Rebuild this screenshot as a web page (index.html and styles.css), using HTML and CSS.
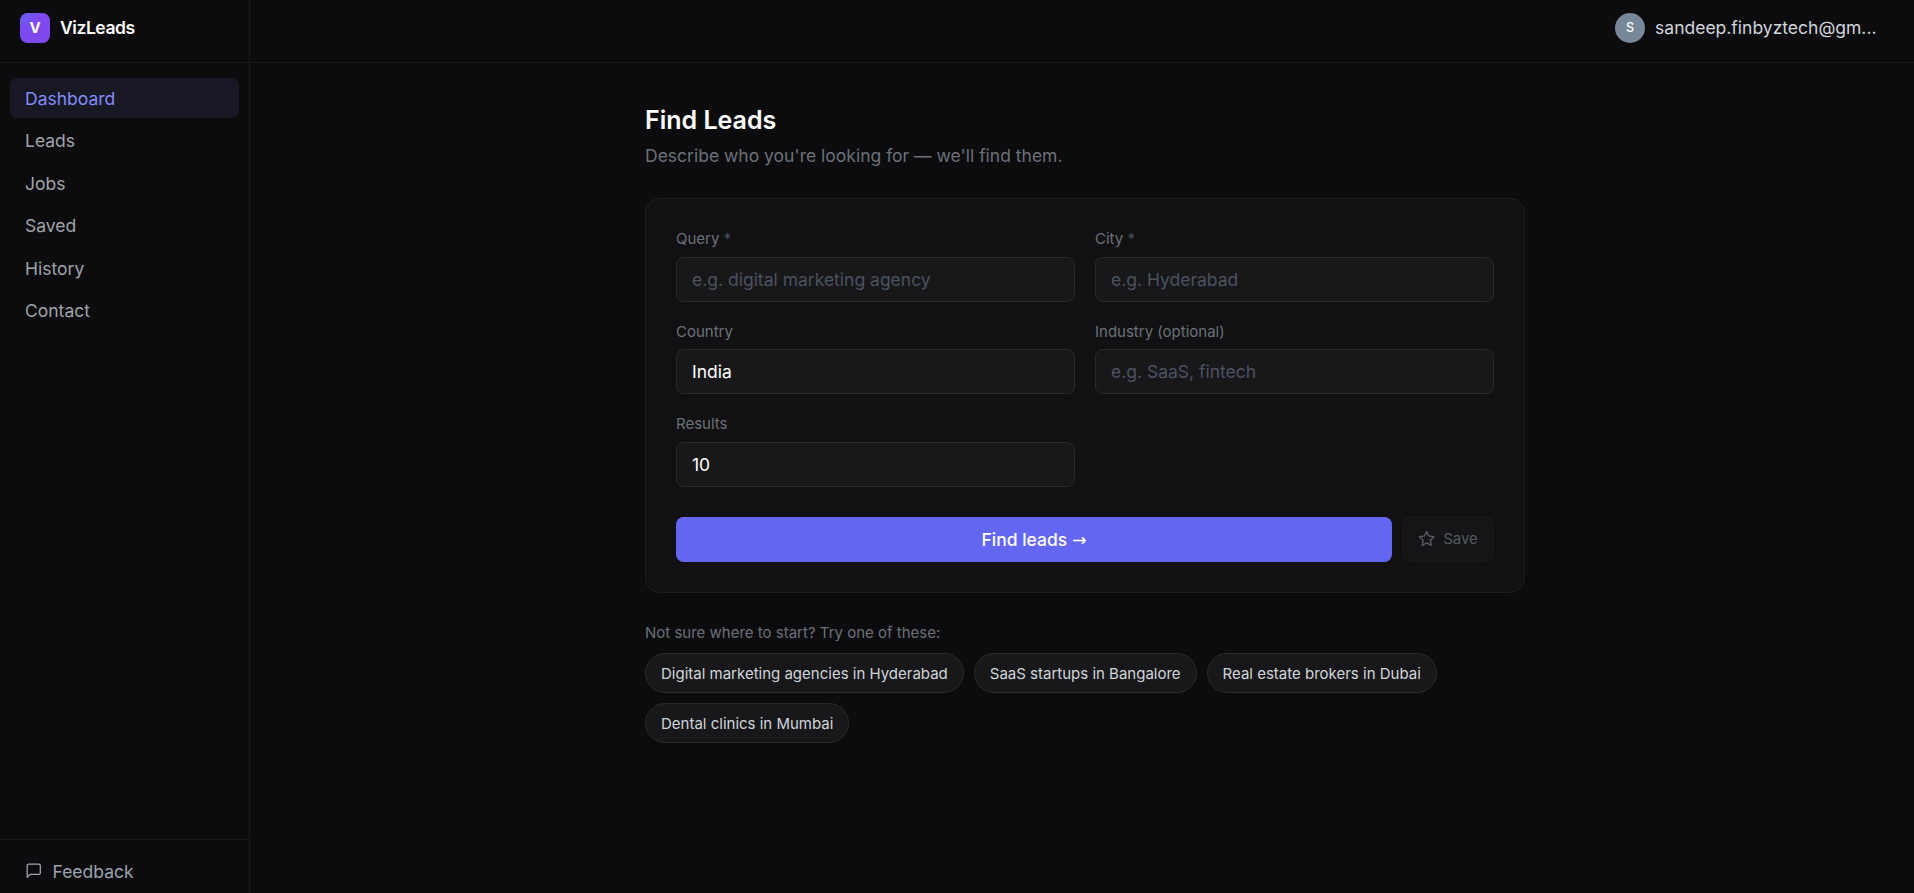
FILE: index.html
```html
<!DOCTYPE html>
<html lang="en">
<head>
<meta charset="utf-8">
<title>VizLeads</title>
<link rel="stylesheet" href="styles.css">
</head>
<body>
<div class="app">
  <aside class="sidebar">
    <div class="brand"><span class="logo">V</span><span class="brand-name">VizLeads</span></div>
    <nav class="nav">
      <a class="nav-item active">Dashboard</a>
      <a class="nav-item">Leads</a>
      <a class="nav-item">Jobs</a>
      <a class="nav-item">Saved</a>
      <a class="nav-item">History</a>
      <a class="nav-item">Contact</a>
    </nav>
    <div class="feedback">
      <svg class="icon-chat" viewBox="0 0 24 24"><path d="M21 15a2 2 0 0 1-2 2H7l-4 4V5a2 2 0 0 1 2-2h14a2 2 0 0 1 2 2z"/></svg>
      <span>Feedback</span>
    </div>
  </aside>
  <div class="page">
    <header class="topbar"><span class="avatar">S</span><span class="email">sandeep.finbyztech@gm...</span></header>
    <main class="content">
      <h1 class="title">Find Leads</h1>
      <p class="subtitle">Describe who you're looking for — we'll find them.</p>
      <form class="card">
        <div class="fields">
          <label class="field"><span class="label">Query <span class="req">*</span></span><input class="input" placeholder="e.g. digital marketing agency"></label>
          <label class="field"><span class="label">City <span class="req">*</span></span><input class="input" placeholder="e.g. Hyderabad"></label>
          <label class="field"><span class="label">Country</span><input class="input" value="India"></label>
          <label class="field"><span class="label">Industry (optional)</span><input class="input" placeholder="e.g. SaaS, fintech"></label>
          <label class="field"><span class="label">Results</span><input class="input" value="10"></label>
        </div>
        <div class="actions">
          <button class="submit" type="button">Find leads <span class="arrow">→</span></button>
          <button class="save" type="button">
            <svg class="icon-star" viewBox="0 0 24 24"><path d="M12 2l3.09 6.26L22 9.27l-5 4.87 1.18 6.88L12 17.77l-6.18 3.25L7 14.14 2 9.27l6.91-1.01z"/></svg>
            <span>Save</span>
          </button>
        </div>
      </form>
      <p class="hint">Not sure where to start? Try one of these:</p>
      <div class="chips">
        <button class="chip">Digital marketing agencies in Hyderabad</button>
        <button class="chip">SaaS startups in Bangalore</button>
        <button class="chip">Real estate brokers in Dubai</button>
        <button class="chip">Dental clinics in Mumbai</button>
      </div>
    </main>
  </div>
</div>
</body>
</html>
```
FILE: styles.css
```css
* { box-sizing: border-box; margin: 0; }
body {
  height: 893px;
  overflow: hidden;
  background: #0c0c0e;
  color: #fff;
  font: 17.5px/25px Inter, sans-serif;
}
button, input { font-family: inherit; }
.app { display: flex; height: 893px; }
.sidebar {
  width: 250px;
  flex: none;
  display: flex;
  flex-direction: column;
  border-right: 1px solid #1a1a1d;
}
.brand {
  height: 63px;
  padding: 0 20px 7px;
  display: flex;
  align-items: center;
  gap: 10px;
  border-bottom: 1px solid #1a1a1d;
}
.logo {
  width: 30px;
  height: 30px;
  border-radius: 7.5px;
  background: linear-gradient(135deg, #6366f1 0%, #7c4af0 35%, #8048ee 100%);
  font-size: 15px;
  font-weight: 700;
  line-height: 29px;
  text-align: center;
}
.brand-name { font-weight: 600; letter-spacing: -0.44px; }
.nav {
  flex: 1;
  padding: 14.75px 10px;
  display: flex;
  flex-direction: column;
  gap: 2.5px;
}
.nav-item {
  height: 40px;
  padding: 8px 15px;
  border-radius: 7.5px;
  color: #a0a3aa;
}
.nav-item.active { background: #181824; color: #818cf8; }
.feedback {
  height: 54px;
  padding: 9px 25px 0;
  display: flex;
  align-items: center;
  gap: 10px;
  border-top: 1px solid #1a1a1d;
  color: #9ca3af;
}
.icon-chat, .icon-star {
  width: 17.5px;
  height: 17.5px;
  flex: none;
  fill: none;
  stroke: currentColor;
  stroke-width: 1.8;
  stroke-linecap: round;
  stroke-linejoin: round;
}
.icon-star { stroke-width: 2; }
.page { flex: 1; }
.topbar {
  height: 63px;
  padding: 0 37.5px 7px;
  display: flex;
  justify-content: flex-end;
  align-items: center;
  gap: 10px;
  border-bottom: 1px solid #1a1a1d;
}
.avatar {
  width: 30px;
  height: 30px;
  border-radius: 50%;
  background: #778899;
  font-size: 12.5px;
  font-weight: 500;
  line-height: 30px;
  text-align: center;
}
.email { color: #d1d5db; }
.content { width: 880px; margin: 40px 0 0 395px; }
.title { font-size: 25px; line-height: 35px; font-weight: 600; }
.subtitle { margin-top: 5px; color: #6b7078; }
.card {
  height: 395px;
  margin-top: 30px;
  padding: 30.25px 30px;
  border: 1px solid #1e1e21;
  border-radius: 15px;
  background: #111113;
}
.fields { display: grid; grid-template-columns: 1fr 1fr; gap: 20px; }
.field { display: block; }
.label {
  display: block;
  margin-bottom: 7.5px;
  font-size: 15px;
  line-height: 20px;
  color: #6b7078;
}
.req { color: #4b4f58; }
.input {
  display: block;
  width: 100%;
  height: 45px;
  padding: 0 15px;
  border: 1px solid #2a2a2d;
  border-radius: 7.5px;
  background: #18181a;
  color: #fff;
  font-size: 17.5px;
}
.input::placeholder { color: #4b5260; }
.actions { margin-top: 30px; display: flex; gap: 10px; }
.submit {
  flex: 1;
  height: 45px;
  border: 0;
  border-radius: 7.5px;
  background: #6366f1;
  color: #fff;
  font-size: 17.5px;
  font-weight: 500;
}
.arrow { font-family: "DejaVu Sans", sans-serif; font-weight: 400; font-size: 17.5px; line-height: 1; }
.save {
  width: 92px;
  height: 45px;
  padding: 0 0 2px;
  display: flex;
  align-items: center;
  justify-content: center;
  gap: 7.5px;
  border: 1px solid #1a1a1c;
  border-radius: 7.5px;
  background: #151517;
  color: #565a62;
  font-size: 15px;
}
.hint { margin-top: 30px; font-size: 15px; line-height: 20px; color: #6b7078; }
.chips { margin-top: 10px; display: flex; flex-wrap: wrap; gap: 10px; }
.chip {
  height: 40px;
  padding: 0 15px;
  border: 1px solid #2a2a2d;
  border-radius: 20px;
  background: #18181a;
  color: #d1d5db;
  font-size: 15px;
}
```
